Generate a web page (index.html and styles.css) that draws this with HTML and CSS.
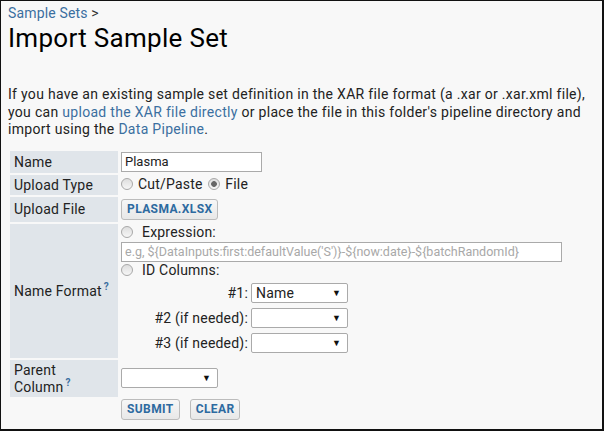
FILE: index.html
```html
<!DOCTYPE html>
<html>
<head>
<meta charset="utf-8">
<link rel="stylesheet" href="styles.css">
</head>
<body>
<div class="page">
  <div class="crumb"><a href="#" class="link">Sample Sets</a> &gt;</div>
  <h1 class="title">Import Sample Set</h1>
  <p class="intro">If you have an existing sample set definition in the XAR file format (a .xar or .xar.xml file), you can <a href="#" class="link">upload the XAR file directly</a> or place the file in this folder's pipeline directory and import using the <a href="#" class="link">Data Pipeline</a>.</p>
  <table class="form">
    <tr>
      <td class="lbl">Name</td>
      <td class="val"><input class="text name-input" type="text" value="Plasma"></td>
    </tr>
    <tr>
      <td class="lbl">Upload Type</td>
      <td class="val"><label class="opt"><input type="radio" name="ut" class="radio"> Cut/Paste</label> <label class="opt"><input type="radio" name="ut" class="radio" checked> File</label></td>
    </tr>
    <tr>
      <td class="lbl">Upload File</td>
      <td class="val"><button class="btn file-btn">PLASMA.XLSX</button></td>
    </tr>
    <tr>
      <td class="lbl">Name Format<sup class="help">?</sup></td>
      <td class="val fmt">
        <label class="opt line"><input type="radio" name="nf" class="radio"> Expression:</label>
        <input class="text expr" type="text" placeholder="e.g, ${DataInputs:first:defaultValue('S')}-${now:date}-${batchRandomId}">
        <label class="opt line"><input type="radio" name="nf" class="radio"> ID Columns:</label>
        <table class="idcols">
          <tr><td class="idl">#1:</td><td><div class="sel"><span>Name</span><span class="arr">&#9660;</span></div></td></tr>
          <tr><td class="idl">#2 (if needed):</td><td><div class="sel"><span></span><span class="arr">&#9660;</span></div></td></tr>
          <tr><td class="idl">#3 (if needed):</td><td><div class="sel"><span></span><span class="arr">&#9660;</span></div></td></tr>
        </table>
      </td>
    </tr>
    <tr>
      <td class="lbl lbl-parent">Parent<br>Column<sup class="help">?</sup></td>
      <td class="val"><div class="sel parent"><span></span><span class="arr">&#9660;</span></div></td>
    </tr>
    <tr>
      <td class="blank"></td>
      <td class="val"><div class="actions"><button class="btn">SUBMIT</button><button class="btn">CLEAR</button></div></td>
    </tr>
  </table>
</div>
</body>
</html>
```

FILE: styles.css
```css
html, body {
  margin: 0;
  padding: 0;
}
body {
  font-family: Roboto, "Liberation Sans", sans-serif;
  color: #222;
}
.page {
  box-sizing: border-box;
  width: 604px;
  height: 431px;
  border-top: 1px solid #111;
  border-left: 1px solid #111;
  border-right: 2px solid #111;
  border-bottom: 2px solid #111;
  background: #f8f8f8;
  padding: 4px 7px 0 7px;
  overflow: hidden;
}
.link {
  color: #3b6fa0;
  text-decoration: none;
}
.crumb {
  font-size: 14px;
  line-height: 16px;
  color: #333;
  letter-spacing: 0.15px;
}
.title {
  font-size: 26px;
  font-weight: 400;
  line-height: 30px;
  margin: 2px 0 0 0;
  color: #000;
  letter-spacing: 0.3px;
}
.intro {
  font-size: 14px;
  line-height: 17.5px;
  margin: 33px 0 10px 0;
  color: #222;
  letter-spacing: 0.3px;
}
.form {
  border-collapse: separate;
  border-spacing: 2px 2px;
  margin: 0;
  font-size: 14px;
  letter-spacing: 0.2px;
}
.lbl {
  background: #e0e5ea;
  width: 100px;
  padding: 2px 4px;
  vertical-align: middle;
  line-height: 16px;
}
.lbl-parent {
  line-height: 17px;
  padding: 2px 4px 1px 4px;
}
.blank {
  padding: 0;
}
.val {
  padding: 1px 1px;
  vertical-align: middle;
}
.fmt {
  padding: 1px 1px 0 1px;
  vertical-align: top;
}
.help {
  color: #3b6fa0;
  font-size: 10px;
  font-weight: 700;
  margin-left: 2px;
  vertical-align: 6px;
  line-height: 0;
}
.text {
  box-sizing: border-box;
  height: 20px;
  border: 1px solid #aaa;
  background: #fff;
  font-family: Roboto, "Liberation Sans", sans-serif;
  font-size: 13px;
  padding: 0 3px;
  margin: 0;
  color: #222;
  display: block;
}
.name-input {
  width: 141px;
}
.expr {
  width: 441px;
  font-size: 12.5px;
  margin: 2px 0 1px 0;
  letter-spacing: 0;
}
.expr::placeholder {
  color: #a8a8a8;
}
.opt {
  display: inline-flex;
  align-items: center;
  gap: 4px;
}
.opt + .opt {
  margin-left: 2px;
}
.line {
  display: flex;
  height: 15px;
  line-height: 15px;
  gap: 8px;
}
.radio {
  appearance: none;
  -webkit-appearance: none;
  box-sizing: border-box;
  width: 12px;
  height: 12px;
  margin: 0 1px 0 0;
  border: 1px solid #a8a8a8;
  border-radius: 50%;
  background: linear-gradient(#dedede, #f6f6f6);
}
.radio:checked {
  background: radial-gradient(circle, #666 0, #666 2.5px, transparent 3.2px), linear-gradient(#dedede, #f6f6f6);
}
.btn {
  font-family: Roboto, "Liberation Sans", sans-serif;
  font-weight: 700;
  font-size: 12px;
  color: #2d6aa0;
  background: linear-gradient(#f7f7f7, #e8e8e8);
  border: 1px solid #bcbcbc;
  border-radius: 3px;
  height: 21px;
  padding: 0 5px;
  margin: 0;
  letter-spacing: 0.4px;
  display: block;
}
.file-btn {
  margin: 1px 0;
}
.actions {
  display: flex;
  gap: 10px;
  margin-top: -1px;
}
.idcols {
  border-collapse: separate;
  border-spacing: 0 5px;
  margin: 0;
}
.idl {
  width: 127px;
  text-align: right;
  padding: 0 2px 0 0;
}
.idcols td {
  padding-top: 0;
  padding-bottom: 0;
}
.sel {
  box-sizing: border-box;
  width: 97px;
  height: 20px;
  border: 1px solid #aaa;
  border-radius: 2px;
  background: #fff;
  display: flex;
  align-items: center;
  justify-content: space-between;
  padding: 0 6px 0 4px;
  font-size: 14px;
  color: #222;
}
.arr {
  font-size: 9px;
  color: #111;
}
.parent {
  margin: 0;
}
```
